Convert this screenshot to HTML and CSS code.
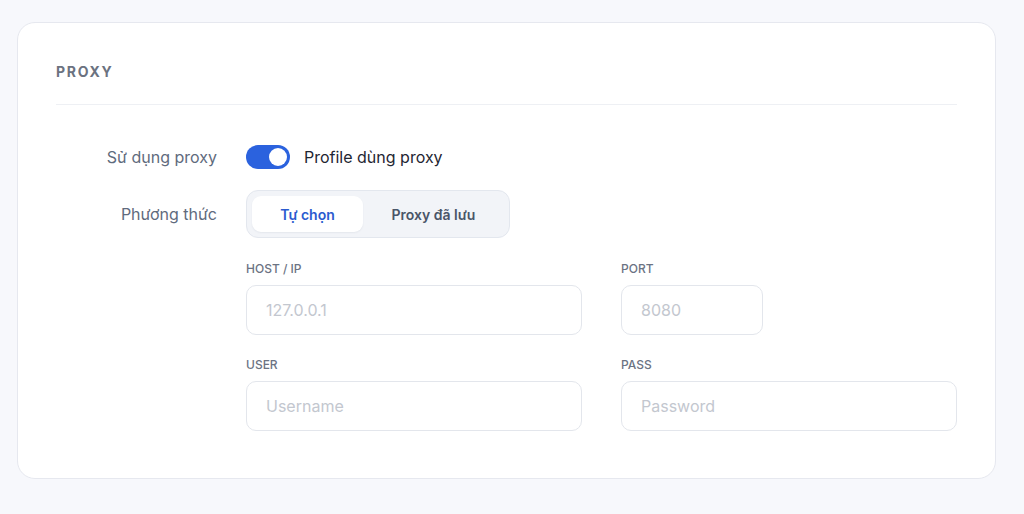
FILE: index.html
```html
<!DOCTYPE html>
<html lang="vi">
<head>
<meta charset="utf-8">
<title>Proxy</title>
<link rel="stylesheet" href="styles.css">
</head>
<body>
<section class="card">
  <header class="card-head">
    <h2 class="card-title">PROXY</h2>
  </header>
  <div class="form">
    <div class="row row-toggle">
      <label class="row-label">Sử dụng proxy</label>
      <div class="row-control">
        <span class="switch is-on"><span class="knob"></span></span>
        <span class="switch-text">Profile dùng proxy</span>
      </div>
    </div>
    <div class="row row-method">
      <label class="row-label">Phương thức</label>
      <div class="row-control">
        <div class="segmented">
          <button class="seg seg-active">Tự chọn</button>
          <button class="seg">Proxy đã lưu</button>
        </div>
      </div>
    </div>
    <div class="row row-fields">
      <span></span>
      <div class="fields">
        <div class="field">
          <label class="field-label">HOST / IP</label>
          <input class="input" placeholder="127.0.0.1">
        </div>
        <div class="field">
          <label class="field-label">PORT</label>
          <input class="input input-port" placeholder="8080">
        </div>
        <div class="field">
          <label class="field-label">USER</label>
          <input class="input" placeholder="Username">
        </div>
        <div class="field">
          <label class="field-label">PASS</label>
          <input class="input" type="password" placeholder="Password">
        </div>
      </div>
    </div>
  </div>
</section>
</body>
</html>
```

FILE: styles.css
```css
* { box-sizing: border-box; }

html, body {
  margin: 0;
  background: #f7f8fc;
  font-family: Inter, "Noto Sans", sans-serif;
}

body {
  padding: 22px 28px 0 17px;
}

.card {
  background: #ffffff;
  border: 1px solid #e6e8ef;
  border-radius: 18px;
  padding: 41px 38px 47px 38px;
}

.card-head {
  padding-bottom: 24px;
  border-bottom: 1px solid #eef0f4;
}

.card-title {
  margin: 0;
  font-size: 14px;
  line-height: 16px;
  font-weight: 700;
  letter-spacing: 1.7px;
  color: #6b7280;
}

.form {
  display: flex;
  flex-direction: column;
}

.row {
  display: grid;
  grid-template-columns: 161px 1fr;
  column-gap: 29px;
  align-items: center;
}

.row-toggle { margin-top: 40px; }
.row-method { margin-top: 21px; }
.row-fields { margin-top: 23px; }

.row-label {
  text-align: right;
  font-size: 16px;
  color: #5f6b7d;
}

.row-control {
  display: flex;
  align-items: center;
}

.switch {
  position: relative;
  width: 44px;
  height: 24px;
  border-radius: 12px;
  background: #2b62de;
  flex: none;
}

.switch .knob {
  position: absolute;
  top: 3px;
  right: 3px;
  width: 18px;
  height: 18px;
  border-radius: 50%;
  background: #ffffff;
}

.switch-text {
  margin-left: 14px;
  font-size: 16px;
  color: #1f2633;
}

.segmented {
  display: flex;
  width: 264px;
  padding: 5px;
  background: #f2f4f8;
  border: 1px solid #e3e7ee;
  border-radius: 12px;
}

.seg {
  flex: 1;
  height: 36px;
  border: 0;
  border-radius: 9px;
  background: transparent;
  font-family: inherit;
  font-size: 14px;
  font-weight: 600;
  color: #4a5568;
  padding: 0;
}

.seg-active {
  flex: 0 0 111px;
  background: #ffffff;
  color: #2b5bcf;
  box-shadow: 0 1px 2px rgba(20, 30, 60, 0.06);
}

.fields {
  display: grid;
  grid-template-columns: 1fr 1fr;
  column-gap: 39px;
  row-gap: 22px;
}

.field {
  display: flex;
  flex-direction: column;
  align-items: flex-start;
}

.field-label {
  font-size: 12px;
  line-height: 16px;
  font-weight: 500;
  color: #6b7383;
  margin-bottom: 8px;
}

.input {
  width: 100%;
  height: 50px;
  border: 1px solid #e3e6ec;
  border-radius: 10px;
  padding: 0 19px;
  font-family: inherit;
  font-size: 16px;
  color: #1f2633;
  background: #ffffff;
  outline: none;
}

.input::placeholder {
  color: #c3c7cf;
}

.input-port {
  width: 142px;
}
```
